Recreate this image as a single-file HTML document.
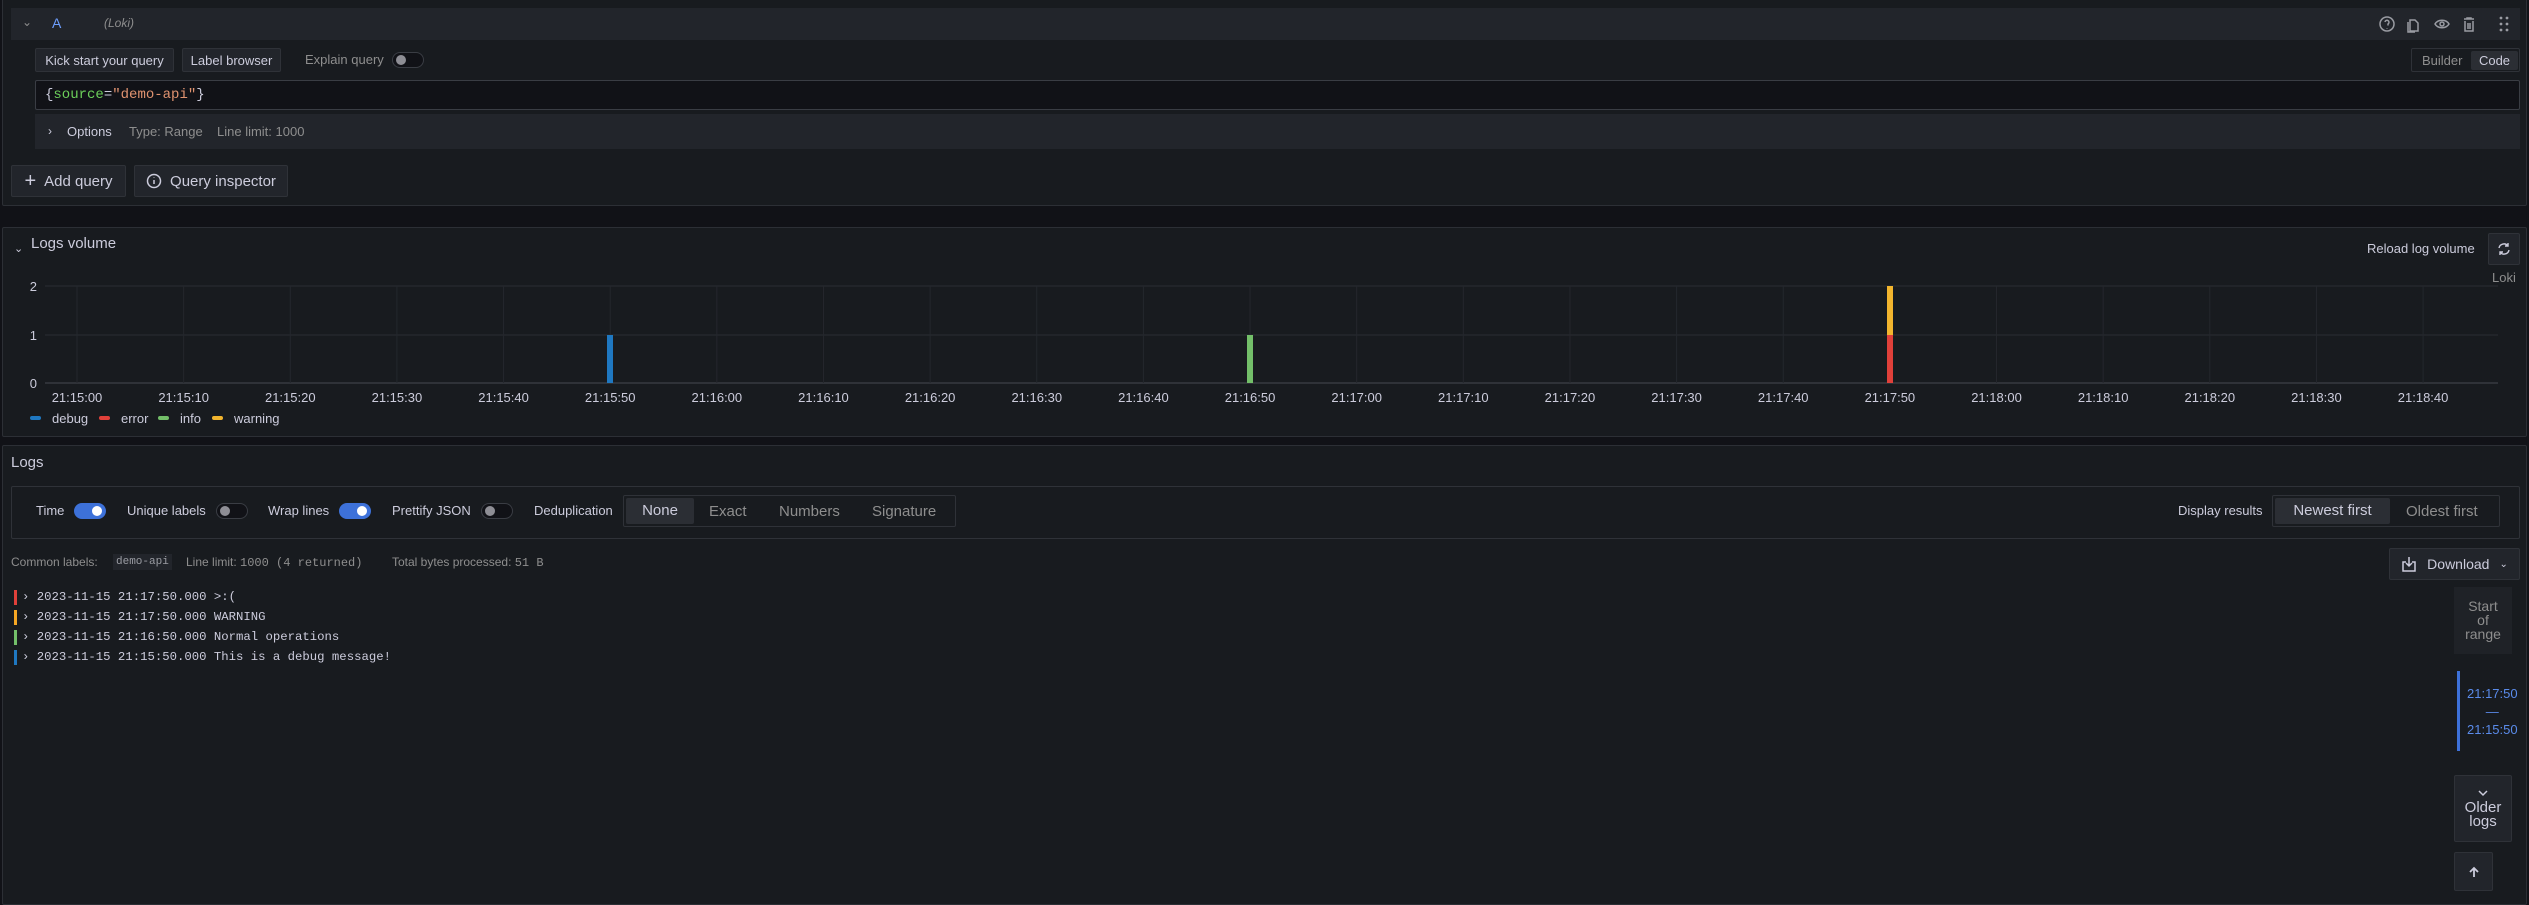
<!DOCTYPE html>
<html><head><meta charset="utf-8"><style>
*{box-sizing:border-box;margin:0;padding:0}
body{width:2529px;height:901px;background:#111217;font-family:"Liberation Sans",sans-serif;color:#ccccdc;position:relative;overflow:hidden;font-size:13px}
.a{position:absolute}
.panel{position:absolute;background:#181b1f;border:1px solid #2c2f35;border-radius:2px}
.btn{position:absolute;background:#22252b;border:1px solid #2f3238;border-radius:2px;color:#ccccdc;display:flex;align-items:center;justify-content:center}
.mono{font-family:"Liberation Mono",monospace}
.tog{position:absolute;width:32px;height:16px;border-radius:8px;border:1px solid #3a3d44;background:#111217}
.tog::after{content:"";position:absolute;left:3px;top:2px;width:10px;height:10px;border-radius:50%;background:#8e8e95}
.tog.on{background:#3d71d9;border-color:#3d71d9}
.tog.on::after{left:17px;background:#fff}
.muted{color:#8e8e8e}
.ll{position:relative;padding-left:8px;height:20px;line-height:20px;white-space:pre}
.ll i{position:absolute;left:0;top:3px;width:3px;height:15px}
</style></head><body>
<!-- query panel -->
<div class="panel" style="left:2px;top:-2px;width:2525px;height:208px"></div>
<div class="a" style="left:11px;top:8px;width:2509px;height:32px;background:#22252b"></div>
<div class="a muted" style="left:22px;top:15px;font-size:12px">⌄</div>
<div class="a" style="left:52px;top:15px;color:#6e9fff;font-size:14px">A</div>
<div class="a muted" style="left:104px;top:16px;font-size:12px;font-style:italic">(Loki)</div>
<svg class="a" style="left:2378px;top:14px" width="140" height="22" fill="none" stroke="#9a9ca3" stroke-width="1.5">
<circle cx="9" cy="10" r="7"/><path d="M7 8a2 2 0 1 1 3 2v1.5M9 14v.5"/>
<path d="M32 6h5l3 3v8h-8zM30 8v10h7"/>
<path d="M57 10c3-5 11-5 14 0c-3 5-11 5-14 0z"/><circle cx="64" cy="10" r="2"/>
<path d="M86 5h10M89 5v-1h4v1M87 7v10h8V7M90 9v6M92 9v6"/>
<g fill="#9a9ca3" stroke="none"><circle cx="123" cy="4" r="1.4"/><circle cx="129" cy="4" r="1.4"/><circle cx="123" cy="10" r="1.4"/><circle cx="129" cy="10" r="1.4"/><circle cx="123" cy="16" r="1.4"/><circle cx="129" cy="16" r="1.4"/></g>
</svg>
<div class="btn" style="left:35px;top:48px;width:139px;height:24px;font-size:13px">Kick start your query</div>
<div class="btn" style="left:182px;top:48px;width:99px;height:24px;font-size:13px">Label browser</div>
<div class="a muted" style="left:305px;top:52px;font-size:13px">Explain query</div>
<div class="tog" style="left:392px;top:52px"></div>
<div class="a" style="left:2411px;top:48px;width:109px;height:24px;border:1px solid #2f3238;border-radius:2px"></div>
<div class="a muted" style="left:2422px;top:53px;font-size:13px">Builder</div>
<div class="a" style="left:2471px;top:51px;width:47px;height:19px;background:#2b2e34;border-radius:2px;font-size:13px;text-align:center;line-height:19px">Code</div>
<div class="a mono" style="left:35px;top:80px;width:2485px;height:30px;background:#111217;border:1px solid #3a3d44;border-radius:2px;padding:6px 9px;font-size:14px">{<span style="color:#6ccf5a">source</span>=<span style="color:#e09370">"demo-api"</span>}</div>
<div class="a" style="left:35px;top:114px;width:2485px;height:35px;background:#22252b"></div>
<div class="a" style="left:48px;top:124px;font-size:12px">›</div>
<div class="a" style="left:67px;top:124px;font-size:13px">Options</div>
<div class="a muted" style="left:129px;top:124px;font-size:13px">Type: Range</div>
<div class="a muted" style="left:217px;top:124px;font-size:13px">Line limit: 1000</div>
<div class="btn" style="left:11px;top:165px;width:115px;height:32px;font-size:15px"><span style="font-size:20px;margin-right:8px;font-weight:300">+</span>Add query</div>
<div class="btn" style="left:134px;top:165px;width:154px;height:32px;font-size:15px"><svg width="16" height="16" style="margin-right:8px" fill="none" stroke="#ccccdc" stroke-width="1.5"><circle cx="8" cy="8" r="6.5"/><path d="M8 7v4M8 4.5v.5"/></svg>Query inspector</div>

<!-- logs volume -->
<div class="panel" style="left:2px;top:227px;width:2525px;height:210px"></div>
<div class="a" style="left:14px;top:242px;font-size:11px">⌄</div>
<div class="a" style="left:31px;top:235px;font-size:15px">Logs volume</div>
<div class="a" style="left:2367px;top:241px;font-size:13px">Reload log volume</div>
<div class="btn" style="left:2488px;top:233px;width:32px;height:32px"><svg width="14" height="14" fill="none" stroke="#ccccdc" stroke-width="1.4"><path d="M2 6a5 5 0 0 1 9-2M12 8a5 5 0 0 1-9 2M11 1v3H8M3 13v-3h3"/></svg></div>
<div class="a muted" style="left:2492px;top:270px;font-size:13px">Loki</div>
<svg class="a" style="left:0;top:270px" width="2529" height="160">
<g stroke="#2a2d33" stroke-width="1">
<line x1="45" y1="16" x2="2498" y2="16"/><line x1="45" y1="65" x2="2498" y2="65"/><line x1="45" y1="113" x2="2498" y2="113" stroke="#2f3238" stroke-width="2"/>
</g>
<g stroke="#24272d" id="vl"></g>
<g fill="#ccccdc" font-family="Liberation Sans" font-size="13" text-anchor="end">
<text x="37" y="21">2</text><text x="37" y="70">1</text><text x="37" y="118">0</text></g>
<rect x="607" y="65" width="6" height="48" fill="#1f78c1"/>
<rect x="1247" y="65" width="6" height="48" fill="#73bf69"/>
<rect x="1887" y="65" width="6" height="48" fill="#e0403a"/>
<rect x="1887" y="16" width="6" height="49" fill="#f2b52e"/>
<g font-family="Liberation Sans" font-size="13" fill="#ccccdc" text-anchor="middle" id="xl"></g>
<g font-family="Liberation Sans" font-size="13" fill="#ccccdc">
<rect x="30" y="146" width="11" height="4" rx="2" fill="#1f78c1"/><text x="52" y="153">debug</text>
<rect x="99" y="146" width="11" height="4" rx="2" fill="#e0403a"/><text x="121" y="153">error</text>
<rect x="158" y="146" width="11" height="4" rx="2" fill="#73bf69"/><text x="180" y="153">info</text>
<rect x="212" y="146" width="11" height="4" rx="2" fill="#f2b52e"/><text x="234" y="153">warning</text>
</g>
</svg>

<!-- logs -->
<div class="panel" style="left:2px;top:445px;width:2525px;height:460px"></div>
<div class="a" style="left:11px;top:454px;font-size:15px">Logs</div>
<div class="a" style="left:11px;top:486px;width:2509px;height:53px;border:1px solid #2f3238;border-radius:2px"></div>
<div class="a" style="left:36px;top:503px;font-size:13px">Time</div>
<div class="tog on" style="left:74px;top:503px"></div>
<div class="a" style="left:127px;top:503px;font-size:13px">Unique labels</div>
<div class="tog" style="left:216px;top:503px"></div>
<div class="a" style="left:268px;top:503px;font-size:13px">Wrap lines</div>
<div class="tog on" style="left:339px;top:503px"></div>
<div class="a" style="left:392px;top:503px;font-size:13px">Prettify JSON</div>
<div class="tog" style="left:481px;top:503px"></div>
<div class="a" style="left:534px;top:503px;font-size:13px">Deduplication</div>
<div class="a" style="left:623px;top:495px;width:333px;height:32px;border:1px solid #2f3238;border-radius:2px"></div>
<div class="a" style="left:626px;top:498px;width:68px;height:26px;background:#2b2e34;border-radius:2px;font-size:15px;text-align:center;line-height:26px">None</div>
<div class="a muted" style="left:709px;top:503px;font-size:15px">Exact</div>
<div class="a muted" style="left:779px;top:503px;font-size:15px">Numbers</div>
<div class="a muted" style="left:872px;top:503px;font-size:15px">Signature</div>
<div class="a" style="left:2178px;top:503px;font-size:13px">Display results</div>
<div class="a" style="left:2272px;top:495px;width:228px;height:32px;border:1px solid #2f3238;border-radius:2px"></div>
<div class="a" style="left:2275px;top:498px;width:115px;height:26px;background:#2b2e34;border-radius:2px;font-size:15px;text-align:center;line-height:26px">Newest first</div>
<div class="a muted" style="left:2406px;top:503px;font-size:15px">Oldest first</div>

<div class="a muted" style="left:11px;top:555px;font-size:12px">Common labels:</div>
<div class="a mono" style="left:113px;top:554px;font-size:11px;background:#22252b;padding:2px 3px;color:#9a9ca3">demo-api</div>
<div class="a muted" style="left:186px;top:555px;font-size:12px">Line limit: <span class="mono">1000 (4 returned)</span></div>
<div class="a muted" style="left:392px;top:555px;font-size:12px">Total bytes processed: <span class="mono">51 B</span></div>
<div class="btn" style="left:2389px;top:548px;width:131px;height:32px;font-size:14px"><svg width="16" height="16" style="margin-right:10px" fill="none" stroke="#ccccdc" stroke-width="1.5"><path d="M5 6H2v9h12V6h-3M8 1v9M5 7l3 3 3-3"/></svg>Download<span style="margin-left:10px;font-size:10px">⌄</span></div>

<div class="a mono" style="left:14px;top:587px;font-size:12.3px">
<div class="ll"><i style="background:#e0403a"></i>› 2023-11-15 21:17:50.000 &gt;:(</div>
<div class="ll"><i style="background:#f5a623"></i>› 2023-11-15 21:17:50.000 WARNING</div>
<div class="ll"><i style="background:#73bf69"></i>› 2023-11-15 21:16:50.000 Normal operations</div>
<div class="ll"><i style="background:#1f78c1"></i>› 2023-11-15 21:15:50.000 This is a debug message!</div>
</div>

<div class="a" style="left:2454px;top:587px;width:58px;height:67px;background:#1f2227;color:#8e8e8e;font-size:14px;line-height:14px;text-align:center;padding-top:12px">Start<br>of<br>range</div>
<div class="a" style="left:2457px;top:671px;width:3px;height:80px;background:#3d71d9"></div>
<div class="a" style="left:2467px;top:685px;font-size:13px;color:#5a8bea;text-align:center;line-height:18px">21:17:50<br>—<br>21:15:50</div>
<div class="btn" style="left:2454px;top:775px;width:58px;height:67px;font-size:15px;line-height:14px;flex-direction:column;text-align:center"><svg width="10" height="8" style="margin-bottom:4px" fill="none" stroke="#ccccdc" stroke-width="1.5"><path d="M1 2l4 4 4-4"/></svg>Older<br>logs</div>
<div class="btn" style="left:2454px;top:852px;width:39px;height:39px"><svg width="12" height="12" fill="none" stroke="#ccccdc" stroke-width="1.8"><path d="M6 11V2M2 6l4-4 4 4"/></svg></div>

<script>
var vl=document.getElementById('vl'),xl=document.getElementById('xl'),s='';var t='';
var lab=["21:15:00","21:15:10","21:15:20","21:15:30","21:15:40","21:15:50","21:16:00","21:16:10","21:16:20","21:16:30","21:16:40","21:16:50","21:17:00","21:17:10","21:17:20","21:17:30","21:17:40","21:17:50","21:18:00","21:18:10","21:18:20","21:18:30","21:18:40"];
for(var i=0;i<23;i++){var x=77+i*106.64;s+='<line x1="'+x+'" y1="16" x2="'+x+'" y2="113"/>';t+='<text x="'+x+'" y="132">'+lab[i]+'</text>';}
vl.innerHTML=s;xl.innerHTML=t;
</script>
</body></html>
